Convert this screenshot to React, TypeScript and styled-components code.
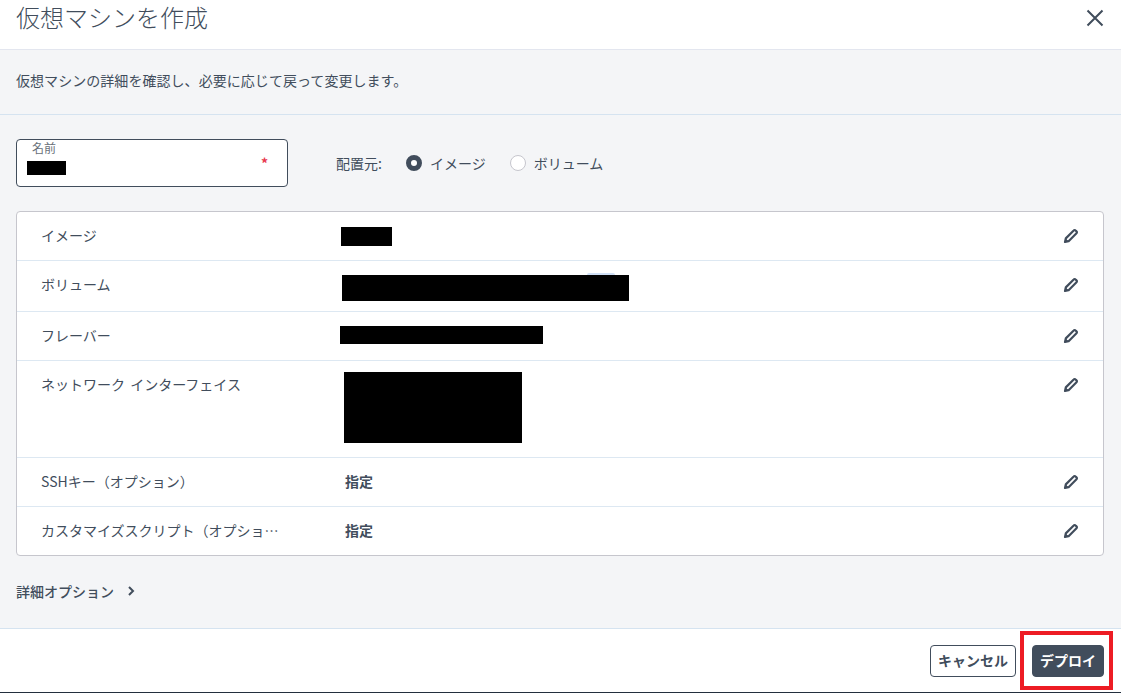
import React from "react";
import styled, { createGlobalStyle } from "styled-components";

const Global = createGlobalStyle`
  html, body { margin: 0; padding: 0; background: #fff; }
  #root { width: 1121px; height: 693px; overflow: hidden; }
  * { box-sizing: border-box; }
`;

const Dialog = styled.div`
  position: relative;
  width: 1121px;
  height: 693px;
  display: flex;
  flex-direction: column;
  font-family: "Noto Sans CJK JP", "Noto Sans", sans-serif;
  color: #414d5c;
  border-bottom: 1px solid #232f3e;
`;

const Header = styled.header`
  height: 50px;
  flex: none;
  display: flex;
  justify-content: space-between;
  padding: 0 14px 0 16px;
  background: #fff;
  border-bottom: 1px solid #e3e6ef;
`;

const Title = styled.h1`
  margin: 0;
  font-size: 24px;
  line-height: 33px;
  font-weight: 300;
  color: #414d5c;
`;

const CloseButton = styled.button`
  width: 24px;
  height: 24px;
  margin-top: 5px;
  padding: 4px 3px 2px;
  border: 0;
  background: none;
  color: #414d5c;
`;

const Body = styled.main`
  flex: 1;
  background: #f4f5f7;
  display: flex;
  flex-direction: column;
`;

const Intro = styled.p`
  margin: 0;
  height: 65px;
  flex: none;
  padding: 0 16px 4px;
  display: flex;
  align-items: center;
  font-size: 14px;
  letter-spacing: 0.05px;
  border-bottom: 1px solid #d5e3f0;
`;

const Form = styled.div`
  padding: 24px 17px 0 16px;
  display: flex;
  flex-direction: column;
`;

const TopRow = styled.div`
  display: flex;
  align-items: center;
  height: 48px;
`;

const NameField = styled.div`
  position: relative;
  width: 272px;
  height: 48px;
  background: #fff;
  border: 1px solid #414d5c;
  border-radius: 4px;
`;

const NameLabel = styled.span`
  position: absolute;
  left: 15px;
  top: -1px;
  font-size: 12px;
  line-height: 17px;
  color: #687078;
`;

const Required = styled.span`
  position: absolute;
  right: 19px;
  top: 15px;
  font-size: 14px;
  line-height: 16px;
  font-weight: 700;
  color: #e8394f;
`;

const Redaction = styled.div<{ $w: number; $h: number; $x?: number; $y?: number }>`
  width: ${(p) => p.$w}px;
  height: ${(p) => p.$h}px;
  margin-left: ${(p) => p.$x ?? 0}px;
  margin-top: ${(p) => p.$y ?? 0}px;
  background: #000;
  flex: none;
`;

const NameRedaction = styled(Redaction)`
  position: absolute;
  left: 10px;
  top: 21px;
  margin: 0;
`;

const Source = styled.div`
  margin-left: 48px;
  display: flex;
  align-items: center;
  font-size: 14px;
`;

const SourceLabel = styled.span`
  margin-right: 24px;
`;

const RadioItem = styled.label`
  display: flex;
  align-items: center;
  gap: 8px;
  margin-right: 24px;
`;

const RadioDot = styled.span<{ $on?: boolean }>`
  width: 16px;
  height: 16px;
  border-radius: 50%;
  background: #fff;
  border: ${(p) => (p.$on ? "5px solid #414d5c" : "1px solid #c6c6cd")};
`;

const Card = styled.section`
  margin-top: 24px;
  background: #fff;
  border: 1px solid #c6c6cd;
  border-radius: 4px;
  height: 345px;
  display: flex;
  flex-direction: column;
`;

const Row = styled.div<{ $h: number }>`
  height: ${(p) => p.$h}px;
  flex: none;
  display: flex;
  align-items: flex-start;
  padding-left: 24px;
  border-bottom: 1px solid #dde8f2;
  &:last-child { border-bottom: 0; }
`;

const RowLabel = styled.div`
  width: 299px;
  flex: none;
  padding-top: 13px;
  padding-right: 59px;
  font-size: 14px;
  line-height: 20px;
  word-spacing: 2px;
  white-space: nowrap;
  overflow: hidden;
  text-overflow: ellipsis;
`;

const RowValue = styled.div`
  position: relative;
  flex: 1;
  min-width: 0;
`;

const PeekingTooltip = styled.span`
  position: absolute;
  left: 247px;
  top: 12px;
  width: 28px;
  height: 2px;
  border-radius: 6px 6px 0 0;
  background: #cfdff5;
`;

const Specified = styled.div`
  margin: 13px 0 0 5px;
  font-size: 14px;
  line-height: 20px;
  font-weight: 700;
`;

const EditButton = styled.button`
  width: 16px;
  height: 16px;
  margin: 16px 24px 0 0;
  padding: 0;
  border: 0;
  background: none;
  color: #414d5c;
`;

const Details = styled.div`
  margin-top: 25px;
  display: flex;
  align-items: center;
  gap: 13px;
  font-size: 14px;
  line-height: 20px;
  font-weight: 500;
`;

const Footer = styled.footer`
  height: 64px;
  flex: none;
  background: #fff;
  border-top: 1px solid #d5e3f0;
  display: flex;
  justify-content: flex-end;
  gap: 16px;
  padding: 16px 17px 0 0;
`;

const BaseButton = styled.button`
  height: 32px;
  border-radius: 4px;
  padding: 0 0 3px;
  font-family: inherit;
  font-size: 14px;
  font-weight: 700;
`;

const CancelButton = styled(BaseButton)`
  width: 86px;
  background: #fff;
  color: #414d5c;
  border: 1px solid #414d5c;
`;

const DeployButton = styled(BaseButton)`
  width: 72px;
  background: #414d5c;
  color: #fff;
  border: 1px solid #414d5c;
`;

const Annotation = styled.div`
  position: absolute;
  left: 1020px;
  top: 631px;
  width: 93px;
  height: 59px;
  border: 4px solid #ed1c24;
  pointer-events: none;
`;

const Pencil = () => (
  <svg width="16" height="16" viewBox="0 0 16 16" fill="none" stroke="currentColor" strokeWidth="2.2" strokeLinejoin="round">
    <path d="M2 14l.8-3.6 7.9-7.9a1.3 1.3 0 0 1 1.9 0l.9.9a1.3 1.3 0 0 1 0 1.9l-7.9 7.9z" />
    <path d="M2.6 13.4l2-.6-1.4-1.4z" fill="currentColor" strokeWidth="1" />
  </svg>
);

const rows: { label: string; h: number; value: React.ReactNode }[] = [
  { label: "イメージ", h: 49, value: <Redaction $w={51} $h={19} $x={1} $y={15} /> },
  {
    label: "ボリューム",
    h: 51,
    value: (
      <>
        <PeekingTooltip />
        <Redaction $w={287} $h={26} $x={2} $y={14} />
      </>
    ),
  },
  { label: "フレーバー", h: 49, value: <Redaction $w={203} $h={18} $y={14} /> },
  { label: "ネットワーク インターフェイス", h: 97, value: <Redaction $w={178} $h={71} $x={4} $y={11} /> },
  { label: "SSHキー\uFF08オプション\uFF09", h: 49, value: <Specified>指定</Specified> },
  { label: "カスタマイズスクリプト\uFF08オプション\uFF09", h: 48, value: <Specified>指定</Specified> },
];

export default function App() {
  return (
    <Dialog>
      <Global />
      <Header>
        <Title>仮想マシンを作成</Title>
        <CloseButton aria-label="閉じる">
          <svg width="18" height="18" viewBox="0 0 18 18" fill="none" stroke="currentColor" strokeWidth="2">
            <path d="M1.5 1.5l15 15M16.5 1.5l-15 15" />
          </svg>
        </CloseButton>
      </Header>
      <Body>
        <Intro>仮想マシンの詳細を確認し、必要に応じて戻って変更します。</Intro>
        <Form>
          <TopRow>
            <NameField>
              <NameLabel>名前</NameLabel>
              <NameRedaction $w={39} $h={14} />
              <Required>*</Required>
            </NameField>
            <Source>
              <SourceLabel>配置元:</SourceLabel>
              <RadioItem><RadioDot $on />イメージ</RadioItem>
              <RadioItem><RadioDot />ボリューム</RadioItem>
            </Source>
          </TopRow>
          <Card>
            {rows.map((r) => (
              <Row key={r.label} $h={r.h}>
                <RowLabel>{r.label}</RowLabel>
                <RowValue>{r.value}</RowValue>
                <EditButton aria-label="編集"><Pencil /></EditButton>
              </Row>
            ))}
          </Card>
          <Details>
            詳細オプション
            <svg width="8" height="10" viewBox="0 0 8 10" fill="none" stroke="currentColor" strokeWidth="2">
              <path d="M2 1l4 4-4 4" />
            </svg>
          </Details>
        </Form>
      </Body>
      <Footer>
        <CancelButton>キャンセル</CancelButton>
        <DeployButton>デプロイ</DeployButton>
      </Footer>
      <Annotation />
    </Dialog>
  );
}
